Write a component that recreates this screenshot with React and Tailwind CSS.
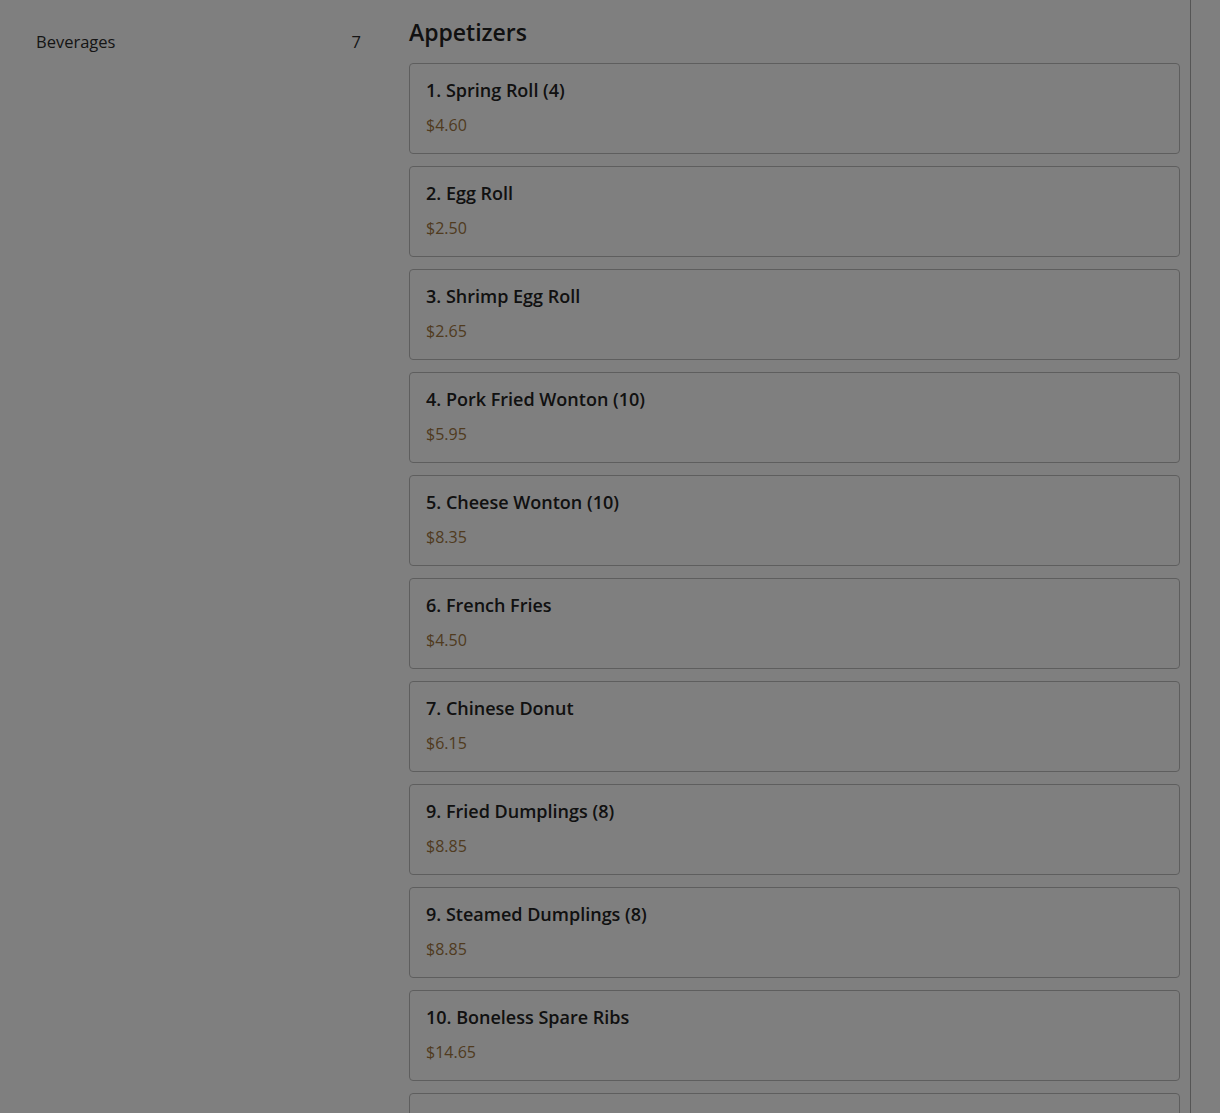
import React from "react";

const items = [
  { name: "1. Spring Roll (4)", price: "$4.60" },
  { name: "2. Egg Roll", price: "$2.50" },
  { name: "3. Shrimp Egg Roll", price: "$2.65" },
  { name: "4. Pork Fried Wonton (10)", price: "$5.95" },
  { name: "5. Cheese Wonton (10)", price: "$8.35" },
  { name: "6. French Fries", price: "$4.50" },
  { name: "7. Chinese Donut", price: "$6.15" },
  { name: "9. Fried Dumplings (8)", price: "$8.85" },
  { name: "9. Steamed Dumplings (8)", price: "$8.85" },
  { name: "10. Boneless Spare Ribs", price: "$14.65" },
  { name: "11. Chicken Wings (6)", price: "$9.95" },
];

function MenuCard({ name, price }) {
  return (
    <div className="rounded-[4px] border border-[#bdbdbd] bg-white px-4 pt-3 pb-4">
      <div className="text-[18px] leading-7 font-semibold text-[#222]">{name}</div>
      <div className="mt-[9px] text-[16px] leading-6 text-[#a0763f]">{price}</div>
    </div>
  );
}

export default function App() {
  return (
    <div
      className="relative h-[1113px] overflow-hidden bg-white"
      style={{ fontFamily: "'Open Sans', Lato, sans-serif" }}
    >
      <div className="flex">
        {/* sidebar */}
        <aside className="w-[385px] shrink-0 pl-6 pr-[12px] pt-[30px]">
          <div className="flex items-center justify-between pl-3 pr-3 text-[16.5px] leading-6 text-[#2b2b2b]">
            <span>Beverages</span>
            <span>7</span>
          </div>
        </aside>

        {/* menu */}
        <main className="w-[806px] shrink-0 border-r border-[#ababab] pl-6 pr-[10px] pt-4">
          <h2 className="mb-[15px] text-[23px] leading-8 font-semibold text-[#222]">Appetizers</h2>
          <div className="flex flex-col gap-3">
            {items.map((it) => (
              <MenuCard key={it.name} {...it} />
            ))}
          </div>
        </main>
      </div>

      {/* dim overlay */}
      <div className="fixed inset-0 bg-black/50" />
    </div>
  );
}
